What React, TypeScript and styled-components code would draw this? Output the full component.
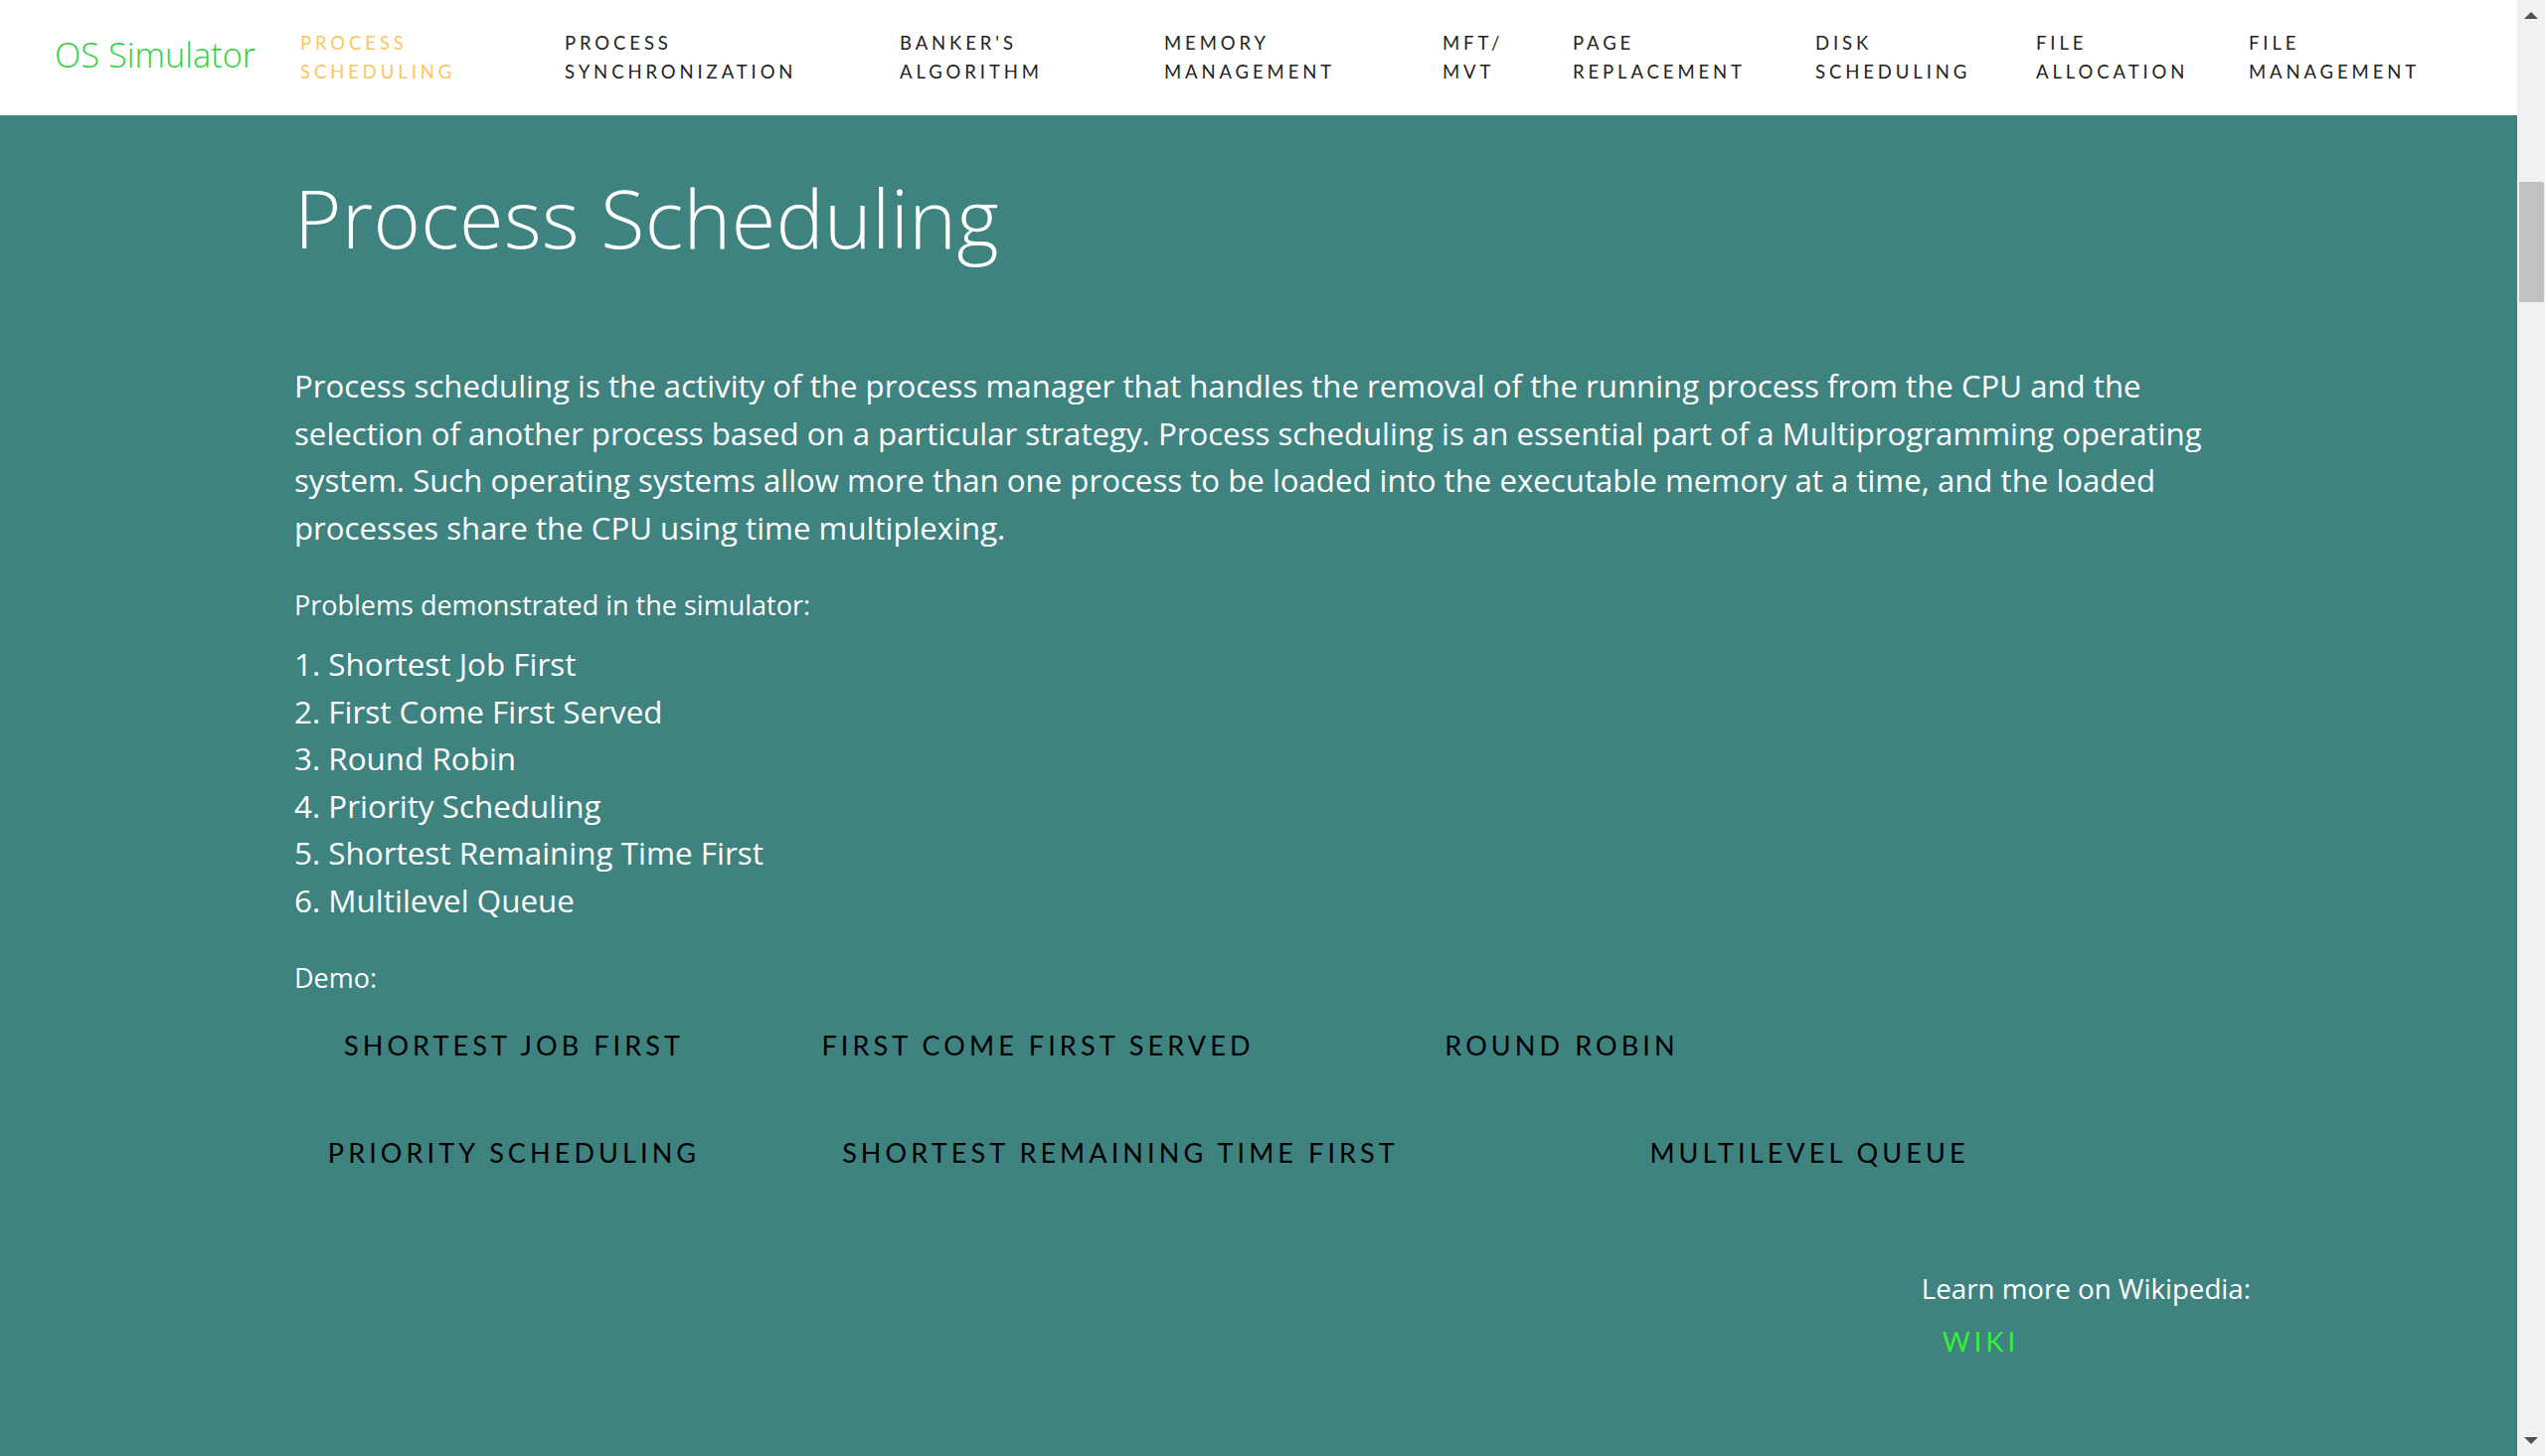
import React from 'react'
import styled, { createGlobalStyle } from 'styled-components'

const GlobalStyle = createGlobalStyle`
  body {
    margin: 0;
    background: #3e8380;
    font-family: "Open Sans", "Noto Sans", sans-serif;
  }
`

const Shell = styled.div`
  display: flex;
  height: 100vh;
  overflow: hidden;
`

const Page = styled.div`
  flex: 1;
  min-width: 0;
  overflow-y: auto;
  scrollbar-width: none;
`

const ScrollBar = styled.aside`
  flex: none;
  display: flex;
  flex-direction: column;
  width: 28px;
  background: #f1f1f1;
`

const ArrowButton = styled.div<{ $down?: boolean }>`
  flex: none;
  display: flex;
  justify-content: center;
  align-items: flex-start;
  height: 28px;
  padding-top: ${p => (p.$down ? 9 : 12)}px;
  box-sizing: border-box;

  &::before {
    content: '';
    border-left: 7px solid transparent;
    border-right: 7px solid transparent;
    ${p => (p.$down ? 'border-top' : 'border-bottom')}: 7px solid #505050;
  }
`

const Track = styled.div`
  flex: 1;
  padding: 0 1px 0 2px;
`

const Thumb = styled.div`
  height: 121px;
  background: #c1c1c1;
`

const Nav = styled.nav`
  display: flex;
  align-items: center;
  height: 116px;
  padding-left: 55px;
  background: #fff;
`

const Brand = styled.a`
  flex: none;
  width: 247px;
  padding-bottom: 5px;
  font-family: "Open Sans", sans-serif;
  font-weight: 300;
  font-size: 34.4px;
  line-height: 1;
  color: #2fd23c;
  text-decoration: none;
`

const NavList = styled.ul`
  display: flex;
  margin: 0;
  padding: 0;
  list-style: none;
`

const NavItem = styled.li<{ $w?: number; $active?: boolean }>`
  flex: none;
  width: ${p => (p.$w ? `${p.$w}px` : 'auto')};
  font-family: Lato, sans-serif;
  font-size: 18.5px;
  line-height: 29px;
  letter-spacing: 3.9px;
  text-transform: uppercase;
  color: ${p => (p.$active ? '#fbc55f' : '#222')};
`

const Main = styled.main`
  min-height: calc(100vh - 116px);
  box-sizing: border-box;
  padding: 55px 0 0 296px;
  background: #3e8380;
  color: #fff;
`

const Content = styled.div`
  width: 1968px;
`

const Title = styled.h1`
  margin: 0;
  font-weight: 300;
  font-size: 81px;
  line-height: 96px;
  letter-spacing: 0.3px;
`

const Lead = styled.p`
  margin: 98px 0 0;
  font-size: 31.2px;
  line-height: 47.5px;
`

const Label = styled.p<{ $gap: number }>`
  margin: ${p => p.$gap}px 0 0;
  font-size: 27px;
  line-height: 40px;
`

const Problems = styled.ul`
  margin: 15px 0 0;
  padding: 0;
  list-style: none;
  font-size: 31.4px;
  line-height: 47.5px;
`

const DemoRow = styled.div<{ $cols: string; $gap: number }>`
  display: grid;
  grid-template-columns: ${p => p.$cols};
  justify-items: center;
  margin-top: ${p => p.$gap}px;
`

const FlatButton = styled.button`
  height: 54px;
  padding: 0;
  border: none;
  background: transparent;
  font-family: Lato, sans-serif;
  font-size: 27px;
  line-height: 54px;
  letter-spacing: 4.1px;
  text-transform: uppercase;
  color: #000;
  cursor: pointer;
`

const Footer = styled.div`
  display: flex;
  justify-content: flex-end;
  margin-top: 89px;
`

const Learn = styled.div`
  font-size: 27.7px;
  line-height: 40px;
`

const WikiLink = styled.a`
  display: block;
  margin-top: 7px;
  padding-left: 21px;
  font-family: Lato, sans-serif;
  font-size: 27px;
  line-height: 54px;
  letter-spacing: 4.1px;
  color: #36f036;
  text-decoration: none;
`

const navLinks = [
  { top: 'Process', bottom: 'Scheduling', w: 266, active: true },
  { top: 'Process', bottom: 'Synchronization', w: 337 },
  { top: "Banker's", bottom: 'Algorithm', w: 266 },
  { top: 'Memory', bottom: 'Management', w: 280 },
  { top: 'MFT/', bottom: 'MVT', w: 131 },
  { top: 'Page', bottom: 'Replacement', w: 244 },
  { top: 'Disk', bottom: 'Scheduling', w: 222 },
  { top: 'File', bottom: 'Allocation', w: 214 },
  { top: 'File', bottom: 'Management' },
]

const problems = [
  'Shortest Job First',
  'First Come First Served',
  'Round Robin',
  'Priority Scheduling',
  'Shortest Remaining Time First',
  'Multilevel Queue',
]

const demoRows = [
  { cols: '442px 612px 442px', gap: 21, items: problems.slice(0, 3) },
  { cols: '442px 778px 608px', gap: 54, items: problems.slice(3) },
]

// where the page was scrolled to when the picture was taken
const thumbOffset = 155

const App: React.FC = () => (
  <>
    <GlobalStyle />
    <Shell>
      <Page>
        <Nav>
          <Brand href="#">OS Simulator</Brand>
          <NavList>
            {navLinks.map(l => (
              <NavItem key={l.top + l.bottom} $w={l.w} $active={l.active}>
                {l.top}
                <br />
                {l.bottom}
              </NavItem>
            ))}
          </NavList>
        </Nav>
        <Main>
          <Content>
            <Title>Process Scheduling</Title>
            <Lead>
              Process scheduling is the activity of the process manager that handles the removal of
              the running process from the CPU and the selection of another process based on a
              particular strategy. Process scheduling is an essential part of a Multiprogramming
              operating system. Such operating systems allow more than one process to be loaded into
              the executable memory at a time, and the loaded processes share the CPU using time
              multiplexing.
            </Lead>
            <Label $gap={34}>Problems demonstrated in the simulator:</Label>
            <Problems>
              {problems.map((p, i) => (
                <li key={p}>
                  {i + 1}. {p}
                </li>
              ))}
            </Problems>
            <Label $gap={35}>Demo:</Label>
            {demoRows.map(row => (
              <DemoRow key={row.cols} $cols={row.cols} $gap={row.gap}>
                {row.items.map(item => (
                  <FlatButton key={item}>{item}</FlatButton>
                ))}
              </DemoRow>
            ))}
            <Footer>
              <Learn>
                Learn more on Wikipedia:
                <WikiLink href="#">WIKI</WikiLink>
              </Learn>
            </Footer>
          </Content>
        </Main>
      </Page>
      <ScrollBar>
        <ArrowButton />
        <Track>
          <Thumb style={{ marginTop: thumbOffset }} />
        </Track>
        <ArrowButton $down />
      </ScrollBar>
    </Shell>
  </>
)

export default App
